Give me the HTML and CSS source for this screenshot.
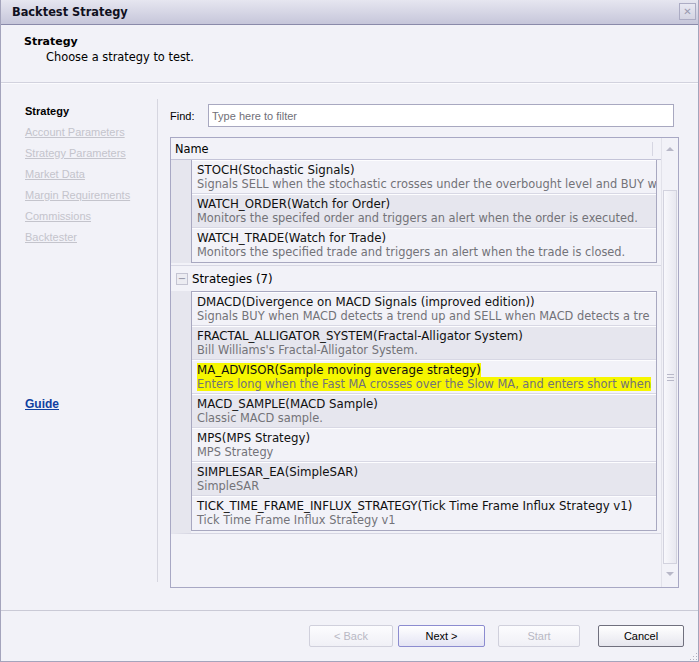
FILE: index.html
```html
<!DOCTYPE html>
<html lang="en">
<head>
    <meta charset="UTF-8">
    <title>Backtest Strategy</title>
    <link rel="stylesheet" href="styles.css">
</head>
<body>
<div class="window">
    <div class="titlebar">
        <span class="title">Backtest Strategy</span>
        <span class="close">&#x2715;</span>
    </div>

    <div class="header">
        <div class="header-title">Strategy</div>
        <div class="header-sub">Choose a strategy to test.</div>
    </div>

    <div class="main">
        <div class="nav">
            <div class="nav-item current">Strategy</div>
            <div class="nav-item">Account Parameters</div>
            <div class="nav-item">Strategy Parameters</div>
            <div class="nav-item">Market Data</div>
            <div class="nav-item">Margin Requirements</div>
            <div class="nav-item">Commissions</div>
            <div class="nav-item">Backtester</div>
            <a class="guide" href="#">Guide</a>
        </div>

        <div class="content">
            <div class="find-row">
                <label class="find-label">Find:</label>
                <input class="find-input" type="text" placeholder="Type here to filter">
            </div>

            <div class="list">
                <div class="list-body">
                    <div class="list-head"><span>Name</span><i class="head-div"></i></div>

                    <div class="group-body">
                        <div class="items">
                            <div class="item">
                                <div class="item-name">STOCH(Stochastic Signals)</div>
                                <div class="item-desc">Signals SELL when the stochastic crosses under the overbought level and BUY w</div>
                            </div>
                            <div class="item alt">
                                <div class="item-name">WATCH_ORDER(Watch for Order)</div>
                                <div class="item-desc">Monitors the specifed order and triggers an alert when the order is executed.</div>
                            </div>
                            <div class="item">
                                <div class="item-name">WATCH_TRADE(Watch for Trade)</div>
                                <div class="item-desc">Monitors the specified trade and triggers an alert when the trade is closed.</div>
                            </div>
                        </div>
                    </div>

                    <div class="group-head">
                        <span class="toggle">&minus;</span>
                        <span>Strategies (7)</span>
                    </div>
                    <div class="group-body last">
                        <div class="items">
                            <div class="item">
                                <div class="item-name">DMACD(Divergence on MACD Signals (improved edition))</div>
                                <div class="item-desc">Signals BUY when MACD detects a trend up and SELL when MACD detects a tre</div>
                            </div>
                            <div class="item alt">
                                <div class="item-name">FRACTAL_ALLIGATOR_SYSTEM(Fractal-Alligator System)</div>
                                <div class="item-desc">Bill Williams's Fractal-Alligator System.</div>
                            </div>
                            <div class="item">
                                <div class="item-name"><span class="mark">MA_ADVISOR(Sample moving average strategy)</span></div>
                                <div class="item-desc"><span class="mark">Enters long when the Fast MA crosses over the Slow MA, and enters short when</span></div>
                            </div>
                            <div class="item alt">
                                <div class="item-name">MACD_SAMPLE(MACD Sample)</div>
                                <div class="item-desc">Classic MACD sample.</div>
                            </div>
                            <div class="item">
                                <div class="item-name">MPS(MPS Strategy)</div>
                                <div class="item-desc">MPS Strategy</div>
                            </div>
                            <div class="item alt">
                                <div class="item-name">SIMPLESAR_EA(SimpleSAR)</div>
                                <div class="item-desc">SimpleSAR</div>
                            </div>
                            <div class="item">
                                <div class="item-name">TICK_TIME_FRAME_INFLUX_STRATEGY(Tick Time Frame Influx Strategy v1)</div>
                                <div class="item-desc">Tick Time Frame Influx Strategy v1</div>
                            </div>
                        </div>
                    </div>
                </div>

                <div class="scrollbar">
                    <div class="arrow up"></div>
                    <div class="thumb"><span class="grip"></span></div>
                    <div class="arrow down"></div>
                </div>
            </div>
        </div>
    </div>

    <div class="footer">
        <button class="btn back" disabled>&lt; Back</button>
        <button class="btn next">Next &gt;</button>
        <button class="btn start" disabled>Start</button>
        <button class="btn cancel">Cancel</button>
        <span class="resize-grip"></span>
    </div>
</div>
</body>
</html>
```

FILE: styles.css
```css
body { margin: 0; font-family: "DejaVu Sans", Verdana, sans-serif; font-size: 11px; color: #000; }

.window {
    width: 699px;
    height: 662px;
    box-sizing: border-box;
    background-color: #f2f2f8;
    border: 1px solid #a4a4bc;
    border-top: none;
    position: relative;
    display: flex;
    flex-direction: column;
}

.titlebar {
    height: 24px;
    flex-shrink: 0;
    display: flex;
    align-items: center;
    justify-content: space-between;
    padding: 0 2px 0 11px;
    background: linear-gradient(#e6e6f0, #c6c6da);
    border-bottom: 1px solid #8a8aaa;
}
.title { font-weight: bold; font-size: 11.4px; color: #101020; }
.close {
    width: 17px;
    height: 17px;
    box-sizing: border-box;
    border: 1px solid #acacc4;
    background: linear-gradient(#e8e8f2, #d4d4e2);
    color: #9a9ab0;
    font-size: 10px;
    font-weight: bold;
    line-height: 15px;
    text-align: center;
    margin-top: -1px;
}

.header {
    height: 58px;
    flex-shrink: 0;
    padding: 10px 0 0 23px;
    box-sizing: border-box;
    border-bottom: 1px solid #d2d2de;
}
.header-title { font-weight: bold; line-height: 14px; }
.header-sub { padding-left: 22px; line-height: 16px; font-size: 11.4px; }

.main { display: flex; height: 527px; flex-shrink: 0; border-top: 1px solid #fbfbfe; box-sizing: border-box; }

.nav {
    width: 157px;
    flex-shrink: 0;
    margin: 15px 0 28px;
    padding: 2px 0 0 24px;
    box-sizing: border-box;
    border-right: 1px solid #d6d6e0;
    font-family: "Liberation Sans", Arial, sans-serif;
    font-size: 11px;
    display: flex;
    flex-direction: column;
    align-items: flex-start;
    white-space: nowrap;
}
.nav-item { line-height: 21px; color: #c4c4cc; text-decoration: underline; }
.nav-item.current { color: #000; font-weight: bold; text-decoration: none; }
.guide {
    margin-top: 146px;
    color: #1040a0;
    font-weight: bold;
    font-size: 12px;
    line-height: 21px;
}

.content { flex: 1; min-width: 0; padding: 20px 19px 0 12px; }

.find-row { display: flex; align-items: center; font-family: "Liberation Sans", Arial, sans-serif; }
.find-label { width: 38px; font-size: 11px; }
.find-input {
    width: 466px;
    height: 23px;
    box-sizing: border-box;
    border: 1px solid #a8a8c0;
    padding: 0 3px;
    font-family: "Liberation Sans", Arial, sans-serif;
    font-size: 11px;
    background: #fff;
    margin: 0;
}
.find-input::placeholder { color: #707078; }

.list {
    margin-top: 10px;
    height: 451px;
    box-sizing: border-box;
    border: 1px solid #a8a8c4;
    display: flex;
}
.list-body { flex: 1; min-width: 0; overflow: hidden; }

.list-head {
    height: 21px;
    display: flex;
    align-items: center;
    justify-content: space-between;
    padding: 0 8px 0 4px;
    border-bottom: 1px solid #c4c4d8;
    font-size: 11.4px;
}
.head-div { width: 1px; height: 14px; background: #d6d6e2; }

.group-body {
    border-left: 20px solid #e6e6ee;
    margin-right: 4px;
}
.group-body.last { padding-bottom: 2px; border-bottom: 1px solid #d6d6e2; margin-right: 0; }
.group-body.last .items { margin-right: 4px; }

.items {
    border: 1px solid #a8a8c0;
    border-top: none;
}
.group-body.last .items { border-top: 1px solid #a8a8c0; }

.item {
    height: 34px;
    box-sizing: border-box;
    padding: 2px 0 0 5px;
    border-top: 1px solid #fdfdff;
    border-bottom: 1px solid #d8d8e4;
    white-space: nowrap;
    overflow: hidden;
    line-height: 14px;
}
.item:last-child { border-bottom: none; }
.item.alt { background-color: #e6e6ee; }
.item-name { color: #101010; font-size: 11.8px; }
.item-desc { color: #737378; font-size: 11.4px; }
.mark { background-color: #f6f600; }

.group-head {
    height: 26px;
    box-sizing: border-box;
    border-top: 1px solid #d8d8e4;
    margin-top: 2px;
    display: flex;
    align-items: center;
    padding-left: 5px;
    font-size: 11.8px;
}
.toggle {
    width: 12px;
    height: 12px;
    box-sizing: border-box;
    border: 1px solid #c4c4d2;
    background: #ececf2;
    color: #8c8ca0;
    font-size: 10px;
    line-height: 9px;
    text-align: center;
    margin-right: 4px;
}

.scrollbar {
    width: 16px;
    flex-shrink: 0;
    border-left: 1px solid #e2e2ea;
    display: flex;
    flex-direction: column;
    align-items: center;
}
.arrow { width: 0; height: 0; border-left: 4px solid transparent; border-right: 4px solid transparent; }
.arrow.up { border-bottom: 4px solid #b8b8c8; margin: 9px 0 39px; }
.arrow.down { border-top: 4px solid #b8b8c8; margin-top: 8px; }
.thumb {
    width: 14px;
    height: 374px;
    box-sizing: border-box;
    border: 1px solid #d2d2de;
    background: linear-gradient(to right, #f8f8fc, #e8e8f0);
    display: flex;
    align-items: center;
    justify-content: center;
}
.grip {
    width: 7px;
    height: 5px;
    border-top: 1px solid #b8b8c8;
    border-bottom: 1px solid #b8b8c8;
    position: relative;
}
.grip::after { content: ""; position: absolute; left: 0; right: 0; top: 2px; border-top: 1px solid #b8b8c8; }

.footer {
    flex: 1;
    border-top: 1px solid #cacad6;
    display: flex;
    align-items: flex-start;
    padding: 14px 0 0 308px;
    position: relative;
}
.btn {
    height: 22px;
    flex-shrink: 0;
    box-sizing: border-box;
    margin: 0;
    padding: 0;
    font-family: "Liberation Sans", Arial, sans-serif;
    font-size: 11px;
    color: #000;
    border: 1px solid #70707e;
    border-radius: 2px;
    background: linear-gradient(#ffffff, #e6e6ee);
}
.btn:disabled { color: #b8b8c4; border-color: #d0d0dc; background: linear-gradient(#fcfcfe, #f0f0f6); }
.back { width: 84px; margin-right: 5px; }
.next { width: 87px; margin-right: 13px; border-color: #8c8cd0; background: linear-gradient(#ffffff, #e4e4f4); }
.start { width: 82px; margin-right: 18px; }
.cancel { width: 86px; }
.resize-grip {
    position: absolute;
    right: 1px;
    bottom: 1px;
    width: 8px;
    height: 8px;
    background: radial-gradient(circle, #b0b0c0 0.7px, transparent 1px) 0 0 / 3px 3px;
    clip-path: polygon(100% 0, 100% 100%, 0 100%);
}
```
